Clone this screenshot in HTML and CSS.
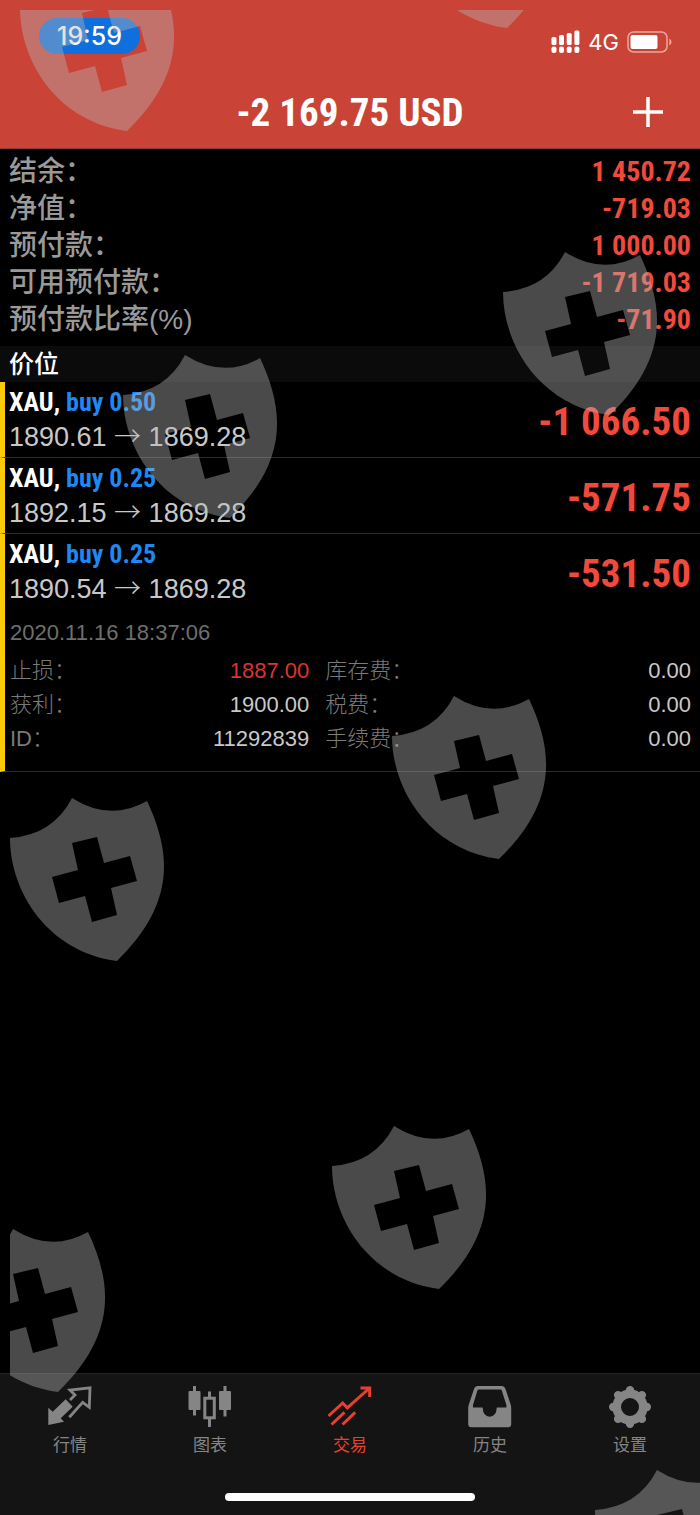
FILE: index.html
```html
<!DOCTYPE html>
<html lang="zh-CN">
<head>
    <meta charset="UTF-8">
    <meta name="viewport" content="width=device-width, initial-scale=1.0">
    <title>交易</title>
    <link rel="stylesheet" href="styles.css">
</head>
<body>
    <header class="header">
        <div class="status-bar">
            <span class="clock">19:59</span>
            <div class="status-icons">
                <svg width="29" height="24" viewBox="0 0 29 24" fill="currentColor" aria-hidden="true">
                    <rect x="0.5" y="7" width="5" height="8" rx="1.5"/>
                    <rect x="8" y="5" width="5" height="10" rx="1.5"/>
                    <rect x="15.7" y="3" width="5" height="12" rx="1.5"/>
                    <rect x="23.4" y="0.5" width="5" height="14.5" rx="1.5"/>
                    <rect x="0.5" y="16.5" width="5" height="6.5" rx="2"/>
                    <rect x="8" y="16.5" width="5" height="6.5" rx="2"/>
                    <rect x="15.7" y="16.5" width="5" height="6.5" rx="2"/>
                    <rect x="23.4" y="16.5" width="5" height="6.5" rx="2"/>
                </svg>
                <span class="network">4G</span>
                <svg width="45" height="22" viewBox="0 0 45 22" aria-hidden="true">
                    <rect x="1" y="1" width="39" height="20" rx="5.5" fill="none" stroke="#e9a79f" stroke-width="1.5"/>
                    <rect x="3.5" y="4" width="27" height="14" rx="2" fill="#fff"/>
                    <path d="M42.3 7.5q2.2 1 2.2 3.5t-2.2 3.5z" fill="#e9a79f"/>
                </svg>
            </div>
        </div>
        <div class="title-bar">
            <h1>-2 169.75 USD</h1>
            <button class="add-btn" type="button" aria-label="新订单">
                <svg width="32" height="32" viewBox="0 0 32 32" aria-hidden="true">
                    <path d="M16 1v30M1 16h30" stroke="#fff" stroke-width="3.5" fill="none"/>
                </svg>
            </button>
        </div>
    </header>

    <main class="content">
        <dl class="summary">
            <div><dt>结余：</dt><dd>1 450.72</dd></div>
            <div><dt>净值：</dt><dd>-719.03</dd></div>
            <div><dt>预付款：</dt><dd>1 000.00</dd></div>
            <div><dt>可用预付款：</dt><dd>-1 719.03</dd></div>
            <div><dt>预付款比率(%)</dt><dd>-71.90</dd></div>
        </dl>

        <h2 class="section-title">价位</h2>

        <ul class="positions">
            <li class="position">
                <div class="position-main">
                    <div>
                        <p class="symbol">XAU, <span class="side">buy 0.50</span></p>
                        <p class="prices">1890.61 <span class="arrow">→</span> 1869.28</p>
                    </div>
                    <strong class="profit">-1 066.50</strong>
                </div>
            </li>
            <li class="position">
                <div class="position-main">
                    <div>
                        <p class="symbol">XAU, <span class="side">buy 0.25</span></p>
                        <p class="prices">1892.15 <span class="arrow">→</span> 1869.28</p>
                    </div>
                    <strong class="profit">-571.75</strong>
                </div>
            </li>
            <li class="position">
                <div class="position-main">
                    <div>
                        <p class="symbol">XAU, <span class="side">buy 0.25</span></p>
                        <p class="prices">1890.54 <span class="arrow">→</span> 1869.28</p>
                    </div>
                    <strong class="profit">-531.50</strong>
                </div>
                <div class="details">
                    <p class="open-time">2020.11.16 18:37:06</p>
                    <dl class="detail-grid">
                        <div><dt>止损：</dt><dd class="loss">1887.00</dd></div>
                        <div><dt>库存费：</dt><dd>0.00</dd></div>
                        <div><dt>获利：</dt><dd>1900.00</dd></div>
                        <div><dt>税费：</dt><dd>0.00</dd></div>
                        <div><dt>ID：</dt><dd>11292839</dd></div>
                        <div><dt>手续费：</dt><dd>0.00</dd></div>
                    </dl>
                </div>
            </li>
        </ul>
    </main>

    <footer class="footer">
        <nav class="tabs">
            <a class="tab" href="#quotes">
                <svg width="44" height="42" viewBox="0 0 44 42" aria-hidden="true">
                    <path d="M.3 21.7l4.4 4L17.7 13.3l7 7.4-12 11.6 3.3 3.4L.3 39z" fill="currentColor"/>
                    <path d="M22 14l5-5-5-5 20-2.2-.7 19.5-6.6-5-13.4 15" fill="none" stroke="currentColor" stroke-width="2.8"/>
                </svg>
                <span>行情</span>
            </a>
            <a class="tab" href="#charts">
                <svg width="44" height="42" viewBox="0 0 44 42" fill="currentColor" aria-hidden="true">
                    <rect x="0.5" y="5" width="12" height="19" rx="1"/>
                    <rect x="5" y="0" width="3" height="29.5"/>
                    <rect x="31" y="5" width="12" height="19" rx="1"/>
                    <rect x="35.5" y="0" width="3" height="30.5"/>
                    <rect x="16.8" y="12.2" width="9.5" height="19.6" fill="none" stroke="currentColor" stroke-width="3"/>
                    <rect x="20" y="5.5" width="3" height="6"/>
                    <rect x="20" y="32" width="3" height="9"/>
                </svg>
                <span>图表</span>
            </a>
            <a class="tab active" href="#trade" aria-current="page">
                <svg width="44" height="42" viewBox="0 0 44 42" fill="none" stroke="currentColor" stroke-width="3" aria-hidden="true">
                    <path d="M.5 30l14.2-13 4.6 4.8L41 2.5"/>
                    <path d="M32.5 2h9.2v9"/>
                    <path d="M3.5 38.5l13-12.2M14.5 38.5l12.7-12.2"/>
                </svg>
                <span>交易</span>
            </a>
            <a class="tab" href="#history">
                <svg width="44" height="42" viewBox="0 0 44 42" aria-hidden="true">
                    <path fill="currentColor" fill-rule="evenodd" d="M10 0h23.5q3 0 4 3l5.3 16q.4 1.3.4 3v16q0 3.3-3.3 3.3H3.5Q.2 41.3.2 38V22q0-1.7.5-3L6 3q1-3 4-3zM10.8 3.6q-1 0-1.4 1L5 19v2.5h9.6q.6 9.2 7.1 9.2t7.1-9.2h9.6V19L33.8 4.6q-.4-1-1.4-1z"/>
                </svg>
                <span>历史</span>
            </a>
            <a class="tab" href="#settings">
                <svg width="44" height="42" viewBox="0 0 44 42" fill="none" stroke="currentColor" aria-hidden="true">
                    <circle cx="22" cy="21" r="13.3" stroke-width="8.6"/>
                    <path stroke-width="8.4" stroke-linecap="round" d="M22 4.2h.01M33.9 9.1h.01M38.8 21h.01M33.9 32.9h.01M22 37.8h.01M10.1 32.9h.01M5.2 21h.01M10.1 9.1h.01"/>
                </svg>
                <span>设置</span>
            </a>
        </nav>
        <div class="home-indicator"></div>
    </footer>

    <!-- shield watermark, laid over everything -->
    <svg class="watermark" aria-hidden="true">
        <defs>
            <path id="shield" fill-rule="evenodd" d="M0 40Q43 37 62 0Q100 24 137 3C160 52 168 104 107 163C38 154 0 94 0 40zM62 45L68 72 42 79 49 105 75 98 82 124 107 117 101 90 127 83 120 58 94 65 87 39z"/>
        </defs>
        <use href="#shield" x="10" y="-42"/>
        <use href="#shield" x="390" y="-145"/>
        <use href="#shield" x="493" y="242"/>
        <use href="#shield" x="113" y="345"/>
        <use href="#shield" x="382" y="686"/>
        <use href="#shield" x="0" y="788"/>
        <use href="#shield" x="322" y="1116"/>
        <use href="#shield" x="-59" y="1219"/>
        <use href="#shield" x="585" y="1460"/>
    </svg>
</body>
</html>
```
FILE: styles.css
```css
:root {
    --header-color: #c94436;
    --red: #f04a3c;
    --blue: #1e88f5;
    --yellow: #fbcb0a;
    --label: #9a9a9a;
    --muted: #6e6e6e;
    --light: #c8c8c8;
    --line: #2b2b2b;
    --narrow: "Roboto Condensed", "Liberation Sans", "Noto Sans CJK SC", sans-serif;
}

* {
    margin: 0;
    padding: 0;
    box-sizing: border-box;
}

body {
    position: relative;
    display: flex;
    flex-direction: column;
    min-height: 100vh;
    overflow-x: hidden;
    background-color: #000;
    color: #fff;
    font-family: "Liberation Sans", "Noto Sans CJK SC", sans-serif;
}

.header {
    background-color: var(--header-color);
    border-bottom: 1px solid #8a3a30;
}

.status-bar {
    display: flex;
    justify-content: space-between;
    align-items: flex-start;
    height: 75px;
    padding: 18px 28px 0 39px;
}

.clock {
    padding: 0 18px;
    border-radius: 18px;
    background-color: #0f6fdc;
    font: 500 25px/36px Inter, sans-serif;
}

.status-icons {
    display: flex;
    align-items: center;
    gap: 8px;
    height: 48px;
}

.network {
    font: 400 22px/24px Inter, sans-serif;
}

.title-bar {
    display: grid;
    grid-template-columns: 1fr auto 1fr;
    align-items: center;
    height: 73px;
    padding: 0 36px;
}

.title-bar h1 {
    grid-column: 2;
    padding-top: 2px;
    font: bold 39px/48px var(--narrow);
}

.add-btn {
    justify-self: end;
    display: flex;
    border: none;
    background: none;
    cursor: pointer;
}

.content {
    flex: 1;
}

.summary {
    padding: 4px 9px 8px;
}

.summary div {
    display: flex;
    justify-content: space-between;
    line-height: 37px;
}

.summary dt {
    color: var(--label);
    font-size: 28px;
    font-weight: 500;
}

.summary dd {
    color: var(--red);
    font-family: var(--narrow);
    font-size: 28px;
    font-weight: bold;
}

.section-title {
    padding: 0 9px;
    background-color: #0b0b0b;
    font-size: 25px;
    font-weight: 500;
    line-height: 36px;
}

.positions {
    list-style: none;
}

.position {
    border-left: 5px solid var(--yellow);
    border-bottom: 1px solid var(--line);
    padding: 2px 9px 2px 4px;
}

.position-main {
    display: flex;
    justify-content: space-between;
    align-items: center;
}

.symbol {
    font: bold 26px/36px var(--narrow);
}

.side {
    color: var(--blue);
}

.prices {
    color: var(--light);
    font-size: 27px;
    line-height: 35px;
}

.arrow {
    font-family: "Noto Sans CJK SC", sans-serif;
    font-weight: 300;
    line-height: 1;
}

.profit {
    padding-top: 4px;
    color: var(--red);
    font: bold 39px/48px var(--narrow);
}

.details {
    padding: 9px 0 13px 1px;
    font-size: 22px;
    line-height: 34px;
}

.open-time {
    color: var(--muted);
    margin-bottom: 4px;
}

.detail-grid {
    display: grid;
    grid-template-columns: 9fr 11fr;
    column-gap: 16px;
}

.detail-grid div {
    display: flex;
    justify-content: space-between;
}

.detail-grid dt {
    color: #7a7a7a;
    font-weight: 300;
}

.detail-grid dd {
    color: var(--light);
}

.detail-grid .loss {
    color: #d9362c;
}

.footer {
    background-color: #141414;
    border-top: 1px solid #222;
    padding: 12px 0 14px;
}

.tabs {
    display: grid;
    grid-template-columns: repeat(5, 1fr);
}

.tab {
    display: flex;
    flex-direction: column;
    align-items: center;
    gap: 5px;
    color: #858585;
    font-size: 17px;
    line-height: 26px;
    text-decoration: none;
}

.tab.active {
    color: #e8402f;
}

.home-indicator {
    width: 250px;
    height: 8px;
    margin: 34px auto 0;
    border-radius: 4px;
    background-color: #fff;
}

.watermark {
    position: absolute;
    top: 10px;
    left: 10px;
    width: calc(100% - 10px);
    height: calc(100% - 10px);
    fill: rgba(185, 185, 185, 0.4);
    pointer-events: none;
}
```
